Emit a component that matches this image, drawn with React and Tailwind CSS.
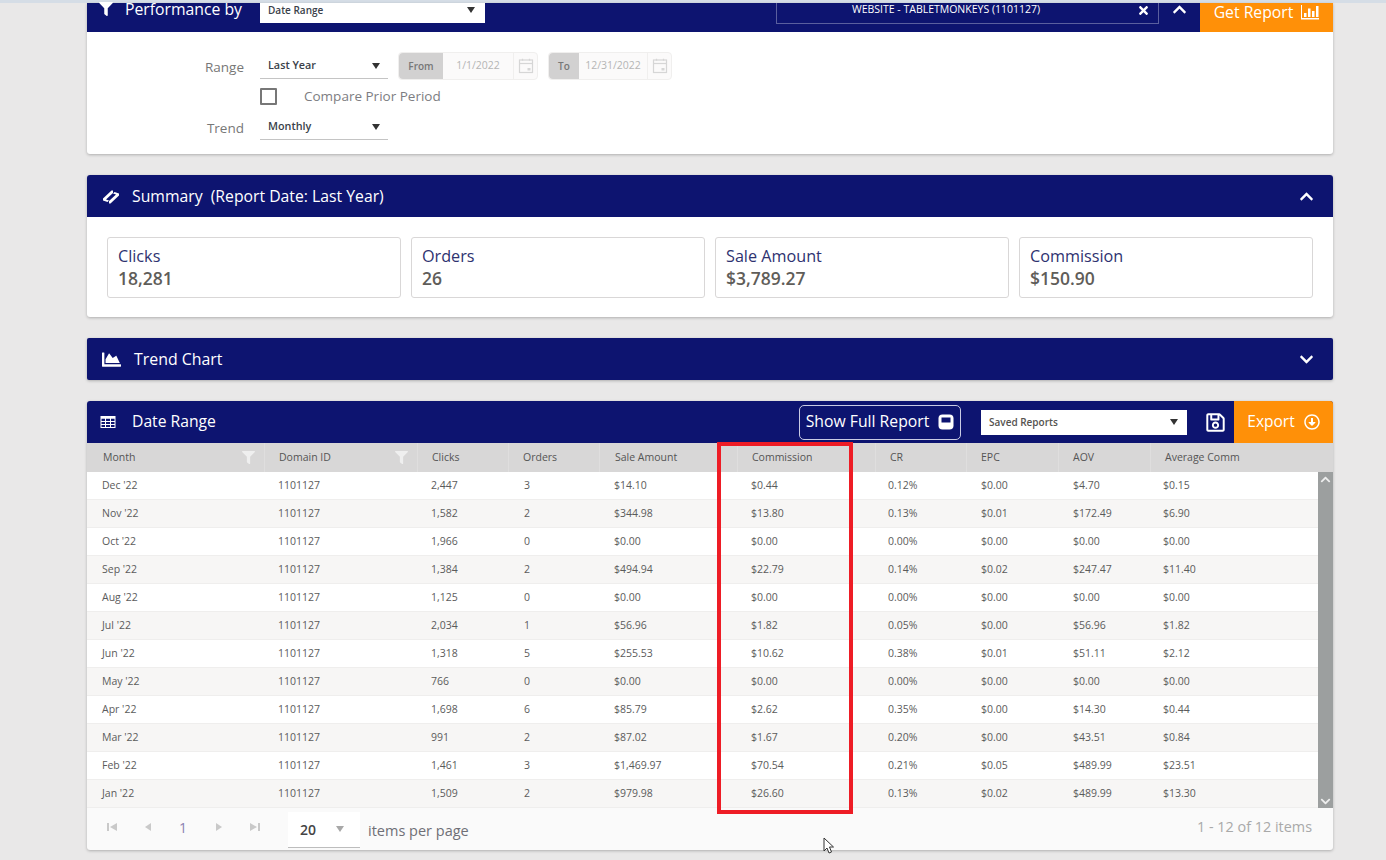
import { FaFilter, FaChevronUp, FaChevronDown, FaChartArea, FaRegSave, FaRegArrowAltCircleDown, FaTimes } from 'react-icons/fa';

const rows = [
  ["Dec '22", '2,447', '3', '$14.10', '$0.44', '0.12%', '$0.00', '$4.70', '$0.15'],
  ["Nov '22", '1,582', '2', '$344.98', '$13.80', '0.13%', '$0.01', '$172.49', '$6.90'],
  ["Oct '22", '1,966', '0', '$0.00', '$0.00', '0.00%', '$0.00', '$0.00', '$0.00'],
  ["Sep '22", '1,384', '2', '$494.94', '$22.79', '0.14%', '$0.02', '$247.47', '$11.40'],
  ["Aug '22", '1,125', '0', '$0.00', '$0.00', '0.00%', '$0.00', '$0.00', '$0.00'],
  ["Jul '22", '2,034', '1', '$56.96', '$1.82', '0.05%', '$0.00', '$56.96', '$1.82'],
  ["Jun '22", '1,318', '5', '$255.53', '$10.62', '0.38%', '$0.01', '$51.11', '$2.12'],
  ["May '22", '766', '0', '$0.00', '$0.00', '0.00%', '$0.00', '$0.00', '$0.00'],
  ["Apr '22", '1,698', '6', '$85.79', '$2.62', '0.35%', '$0.00', '$14.30', '$0.44'],
  ["Mar '22", '991', '2', '$87.02', '$1.67', '0.20%', '$0.00', '$43.51', '$0.84'],
  ["Feb '22", '1,461', '3', '$1,469.97', '$70.54', '0.21%', '$0.05', '$489.99', '$23.51'],
  ["Jan '22", '1,509', '2', '$979.98', '$26.60', '0.13%', '$0.02', '$489.99', '$13.30'],
];

const columns = ['Month', 'Domain ID', 'Clicks', 'Orders', 'Sale Amount', 'Commission', 'CR', 'EPC', 'AOV', 'Average Comm'];
const cols = 'grid grid-cols-[178px_153px_91px_91px_138px_138px_91px_92px_92px_1fr]';
const headPad = ['pl-[16px]', 'pl-[14px]', 'pl-[14px]', 'pl-[14px]', 'pl-[15px]', 'pl-[14px]', 'pl-[14px]', 'pl-[14px]', 'pl-[14px]', 'pl-[14px]'];
const cellPad = ['pl-[13px]', 'pl-[13px]', 'pl-[15px]', 'pl-[14px]', 'pl-[13px]', 'pl-[12px]', 'pl-[14px]', 'pl-[14px]', 'pl-[12px]'];

const Caret = ({ className = 'border-t-[#333]' }) => (
  <span className={`w-0 h-0 border-x-[4px] border-x-transparent border-t-[6px] ${className}`} />
);

const Underlined = ({ label }) => (
  <div className="w-[128px] h-[26px] pl-[8px] pr-[7px] flex items-center justify-between border-b border-[#c4c4c4]">
    <span className="text-[10.800px] font-semibold text-[#3a3f4a]">{label}</span>
    <span className="mr-[1px] flex"><Caret /></span>
  </div>
);

const CalendarIcon = () => (
  <svg width="16" height="16" viewBox="0 0 16 16" fill="none" stroke="#d6d6d6" strokeWidth="1.2">
    <rect x="1.5" y="2" width="13" height="12.5" />
    <path d="M1.500 5.500h13" />
    <path d="M4.500 .8v2M11.500 .8v2" />
    <rect x="9.500" y="10" width="3" height="2.500" fill="#d6d6d6" stroke="none" />
  </svg>
);

const DateBox = ({ label, value, labelW, valueW }) => (
  <div className="flex h-[28px] rounded-sm border border-[#f0efee] bg-[#fbfafa] text-[10.500px]">
    <span className={`${labelW} flex items-center justify-center bg-[#d2d1d1] text-[#777] text-[10px] font-semibold rounded-l-sm`}>{label}</span>
    <span className={`${valueW} flex items-center justify-center text-[#b5b5b5]`}>{value}</span>
    <span className="w-[24px] flex items-center justify-center border-l border-[#f0efee]"><CalendarIcon /></span>
  </div>
);

const Stat = ({ label, value }) => (
  <div className="flex-1 h-[61px] px-[10px] pt-[8px] border border-[#d9d7d7] rounded-[3px] bg-white">
    <div className="text-[16.200px] leading-[21px] text-[#2e3270]">{label}</div>
    <div className="text-[17.500px] leading-[23px] font-semibold text-[#5f5d59]">{value}</div>
  </div>
);

const SummaryIcon = () => (
  <svg width="18" height="16" viewBox="0 0 18 16" fill="white">
    <path d="M1 9.500L9.500 1.500h1.500v2.500L4 10.500l3 1-1.500 1.500-4.500-1.500z" />
    <path d="M17 6.500l-8.500 8h-1.500v-2.500l7-6.500-3-1 1.500-1.500 4.500 1.500z" />
  </svg>
);

const TableIcon = () => (
  <svg width="16" height="14" viewBox="0 0 16 14" fill="none" stroke="white" strokeWidth="1">
    <rect x="1" y="1.500" width="14" height="11" />
    <path d="M1 2.500h14" strokeWidth="2.500" />
    <path d="M1 6.500h14M1 9.500h14M5.500 1.500v11M10.500 1.500v11" />
  </svg>
);

const FullReportIcon = () => (
  <svg width="16" height="16" viewBox="0 0 16 16">
    <rect x="0.500" y="0.500" width="15" height="15" rx="4" fill="white" />
    <rect x="3.500" y="3.500" width="9" height="5" fill="#0d1470" />
  </svg>
);

const ReportBarsIcon = () => (
  <svg width="18" height="15" viewBox="0 0 18 15" fill="white">
    <path d="M0 0h1v13h17v1.500H0z" />
    <path d="M3 8h2.500v4H3zM7 3.500h2.500V12H7zM11 6h2.500v6H11zM15 1h2.500v11H15z" />
  </svg>
);

const Pager = ({ d }) => (
  <svg width="10" height="10" viewBox="0 0 10 10" fill="#c9c9c9"><path d={d} /></svg>
);

const Cursor = () => (
  <svg width="13" height="18" viewBox="0 0 13 18" fill="white" stroke="#333" strokeWidth="1">
    <path d="M1 1v13l3-3 2 5 2.500-1-2-5h4z" />
  </svg>
);

export default function App() {
  return (
    <div className="relative w-[1386px] h-[860px] overflow-hidden bg-[#e9e8e8] font-['Open_Sans',sans-serif]">
      <div className="h-[3px] bg-[#d5dde6]" />

      <div className="ml-[87px] w-[1246px] flex flex-col gap-[21px]">
        {/* filtre du haut */}
        <section className="bg-white rounded-b-[3px] shadow-[0_1px_3px_rgba(0,0,0,0.25)]">
          <div className="h-[29px] bg-[#0d1470] flex items-start text-white">
            <FaFilter className="ml-[12px] mt-[-1px] text-[14px]" />
            <span className="ml-[12px] mt-[-1px] w-[122px] text-[15.750px] leading-[15px] whitespace-nowrap">Performance by</span>
            <div className="ml-[13px] w-[225px] h-[20px] bg-white pl-[8px] pr-[8px] pb-[6px] flex items-center justify-between">
              <span className="text-[10px] font-semibold text-[#3a3f4a]">Date Range</span>
              <span className="mr-[2px] flex"><Caret /></span>
            </div>
            <div className="ml-[291px] w-[383px] h-[21px] border border-t-0 border-[#5a5f9e] pb-[6px] flex items-center relative">
              <span className="w-full pl-[75px] text-[10.500px]">WEBSITE - TABLETMONKEYS (1101127)</span>
              <FaTimes className="absolute right-[8px] top-[1px] text-[13px]" />
            </div>
            <div className="w-[41px] flex justify-center mt-[-1px]"><FaChevronUp className="text-[15px]" /></div>
            <div className="w-[133px] h-[29px] pb-[10px] bg-[#ff9008] flex items-center justify-center gap-[8px]">
              <span className="text-[15.750px]">Get Report</span>
              <ReportBarsIcon />
            </div>
          </div>
          <div className="h-[122px] pt-[20px] pl-[117px]">
            <div className="flex items-center h-[28px]">
              <span className="w-[40px] mt-[2px] text-right text-[13.500px] text-[#777]">Range</span>
              <div className="ml-[16px]"><Underlined label="Last Year" /></div>
              <div className="ml-[10px]"><DateBox label="From" value="1/1/2022" labelW="w-[44px]" valueW="w-[70px]" /></div>
              <div className="ml-[10px]"><DateBox label="To" value="12/31/2022" labelW="w-[30px]" valueW="w-[68px]" /></div>
            </div>
            <div className="flex items-center h-[28px] pl-[56px] mt-[2px]">
              <span className="w-[17px] h-[17px] border-2 border-[#777] rounded-[1px]" />
              <span className="ml-[27px] text-[13.500px] text-[#7d7d82]">Compare Prior Period</span>
            </div>
            <div className="flex items-center h-[28px] mt-[3px]">
              <span className="w-[40px] mt-[2px] text-right text-[13.500px] text-[#777]">Trend</span>
              <div className="ml-[16px]"><Underlined label="Monthly" /></div>
            </div>
          </div>
        </section>

        {/* résumé */}
        <section className="bg-white rounded-[3px] shadow-[0_1px_3px_rgba(0,0,0,0.25)]">
          <div className="h-[42px] pt-[1px] bg-[#0d1470] rounded-t-[3px] flex items-center justify-between pl-[15px] pr-[19px] text-white">
            <div className="flex items-center gap-[12px]">
              <SummaryIcon />
              <span className="text-[15.750px] whitespace-pre">Summary  (Report Date: Last Year)</span>
            </div>
            <FaChevronUp className="text-[15px]" />
          </div>
          <div className="h-[100px] px-[20px] flex items-center gap-[10px]">
            <Stat label="Clicks" value="18,281" />
            <Stat label="Orders" value="26" />
            <Stat label="Sale Amount" value="$3,789.27" />
            <Stat label="Commission" value="$150.90" />
          </div>
        </section>

        <section className="h-[42px] pt-[1px] bg-[#0d1470] rounded-[2px] shadow-[0_1px_3px_rgba(0,0,0,0.25)] flex items-center justify-between pl-[15px] pr-[19px] text-white">
          <div className="flex items-center gap-[13px]">
            <FaChartArea className="text-[19px]" />
            <span className="text-[15.900px]">Trend Chart</span>
          </div>
          <FaChevronDown className="text-[15px]" />
        </section>

        {/* tableau */}
        <section className="bg-[#fafafa] rounded-[3px] shadow-[0_1px_3px_rgba(0,0,0,0.25)]">
          <div className="h-[42px] bg-[#0d1470] rounded-t-[3px] flex items-center text-white">
            <span className="ml-[13px] flex"><TableIcon /></span>
            <span className="ml-[16px] text-[15.700px]">Date Range</span>
            <button className="ml-auto w-[162px] h-[35px] border border-[#c9cbe4] rounded-[5px] flex items-center justify-center gap-[9px] text-[15.750px]">
              Show Full Report <FullReportIcon />
            </button>
            <div className="ml-[20px] w-[206px] h-[25px] bg-white px-[8px] flex items-center justify-between">
              <span className="text-[10px] font-semibold text-[#55534f]">Saved Reports</span>
              <span className="mr-[1px] flex"><Caret /></span>
            </div>
            <FaRegSave className="ml-[18px] text-[21px]" />
            <div className="ml-[8px] w-[99px] h-[42px] bg-[#ff9008] rounded-tr-[3px] flex items-center justify-center gap-[9px]">
              <span className="text-[15.500px]">Export</span>
              <FaRegArrowAltCircleDown className="text-[16px]" />
            </div>
          </div>

          <div className={`${cols} h-[29px] bg-[#d8d7d7] text-[10.500px] text-[#555]`}>
            {columns.map((c, i) => (
              <div key={c} className={`relative flex items-center pt-[1px] ${headPad[i]} border-r border-[#dfdede] last:border-r-0`}>
                {c}
                {i < 2 && <FaFilter className="absolute right-[9px] top-[8px] text-[13px] text-[#efefef]" />}
              </div>
            ))}
          </div>

          <div className="flex">
            <div className="w-[1231px]">
              {rows.map((r, i) => (
                <div key={r[0]} className={`${cols} h-[28px] items-center text-[10.500px] text-[#5b5b5b] border-b border-[#efeeed] ${i % 2 ? 'bg-[#f7f6f5]' : 'bg-white'}`}>
                  <span className="pl-[15px]">{r[0]}</span>
                  <span className={cellPad[0]}>1101127</span>
                  {r.slice(1).map((v, j) => (
                    <span key={j} className={cellPad[j + 1]}>{v}</span>
                  ))}
                </div>
              ))}
            </div>
            <div className="w-[15px] bg-[#9c9f9f] flex flex-col justify-between">
              <div className="h-[15px] flex items-center justify-center"><FaChevronUp className="text-[11px] text-[#eeeeee]" /></div>
              <div className="h-[14px] flex items-center justify-center"><FaChevronDown className="text-[11px] text-[#eeeeee]" /></div>
            </div>
          </div>

          <div className="h-[42px] pb-[4px] flex items-center pl-[20px] pr-[21px]">
            <Pager d="M0 1h2v8H0zM10 1v8L3 5z" />
            <span className="ml-[26px] flex"><Pager d="M8 1v8L2 5z" /></span>
            <span className="ml-[26px] text-[14px] text-[#8b7fb0]">1</span>
            <span className="ml-[27px] flex"><Pager d="M2 1v8l6-4z" /></span>
            <span className="ml-[26px] flex"><Pager d="M0 1v8l7-4zM8 1h2v8H8z" /></span>
            <div className="ml-[28px] w-[72px] h-[36px] mt-[5px] bg-white border-b border-[#bdbdbd] flex items-center pl-[12px] gap-[20px]">
              <span className="text-[14px] font-semibold text-[#444]">20</span>
              <Caret className="border-t-[#a8a8a8]" />
            </div>
            <span className="ml-[8px] mt-[8px] text-[14.500px] text-[#6f6f76]">items per page</span>
            <span className="ml-auto text-[14.400px] text-[#a9a9a9]">1 - 12 of 12 items</span>
          </div>
        </section>
      </div>

      {/* cadre rouge par-dessus la colonne Commission */}
      <div className="absolute left-[717px] top-[442px] w-[136px] h-[372px] border-[4px] border-[#ee1c25]" />
      <div className="absolute left-[823px] top-[837px]"><Cursor /></div>
    </div>
  );
}
